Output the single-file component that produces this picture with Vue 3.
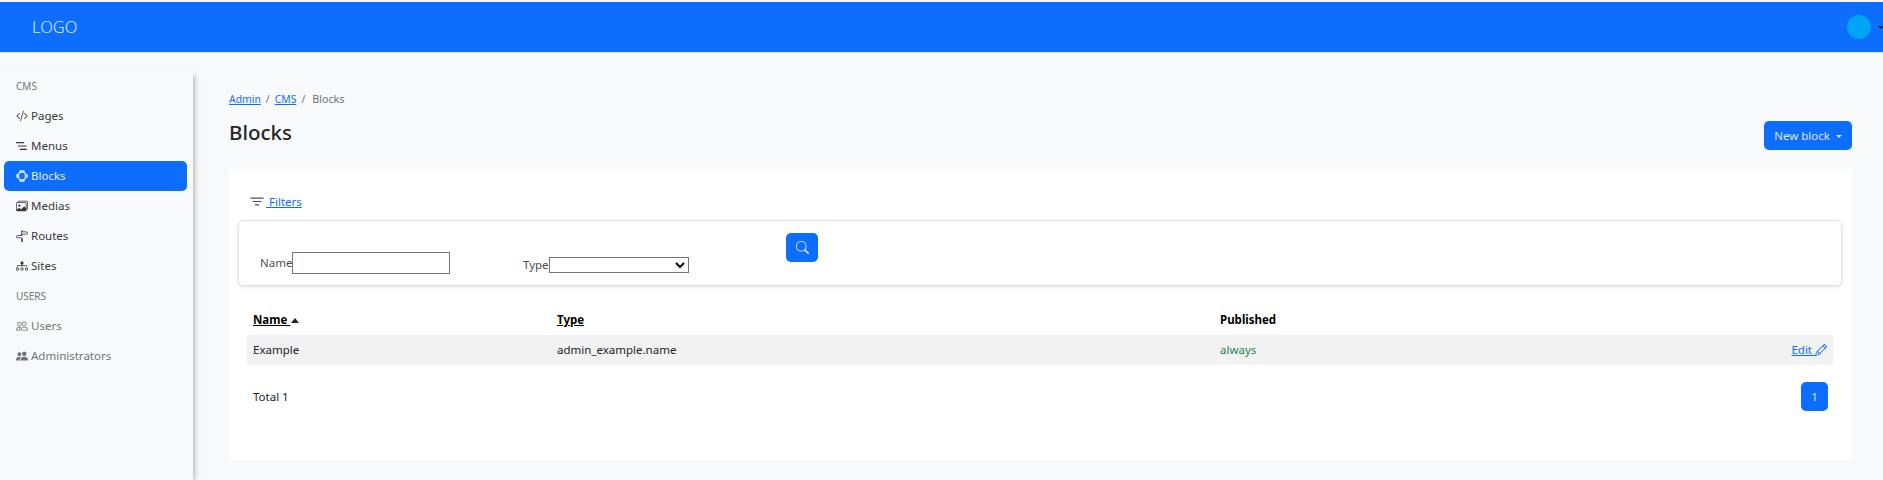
<template>
  <div class="page">
    <header class="topbar">
      <span class="logo">LOGO</span>
      <div class="user">
        <span class="avatar"></span>
        <span class="caret dark"></span>
      </div>
    </header>

    <div class="body">
      <aside class="sidebar">
        <template v-for="section in menu" :key="section.title">
          <div class="menu-title">{{ section.title }}</div>
          <a
            v-for="item in section.items"
            :key="item.label"
            class="menu-item"
            :class="{ active: item.active, muted: section.muted }"
          >
            <svg class="menu-icon" viewBox="0 0 16 16" fill="currentColor" v-html="item.icon"></svg>
            <span>{{ item.label }}</span>
          </a>
        </template>
      </aside>

      <main class="content">
        <nav class="breadcrumb">
          <a class="link">Admin</a><span class="sep">/</span>
          <a class="link">CMS</a><span class="sep">/</span>
          <span class="current">Blocks</span>
        </nav>

        <div class="title-row">
          <h1>Blocks</h1>
          <button class="btn new-btn">New block <span class="caret"></span></button>
        </div>

        <section class="panel">
          <a class="filters-link">
            <svg class="filter-icon" viewBox="0 0 16 16" fill="currentColor">
              <path d="M6 10.5a.5.5 0 0 1 .5-.5h3a.5.5 0 0 1 0 1h-3a.5.5 0 0 1-.5-.5zm-2-3a.5.5 0 0 1 .5-.5h7a.5.5 0 0 1 0 1h-7a.5.5 0 0 1-.5-.5zm-2-3a.5.5 0 0 1 .5-.5h11a.5.5 0 0 1 0 1h-11a.5.5 0 0 1-.5-.5z" />
            </svg>
            <span class="link">&nbsp;Filters</span>
          </a>

          <div class="filters">
            <label class="field name-field">Name<input type="text" /></label>
            <label class="field type-field">Type<select></select></label>
            <button class="btn search-btn" aria-label="Search">
              <svg viewBox="0 0 16 16" fill="currentColor" width="13" height="13">
                <path d="M11.742 10.344a6.5 6.5 0 1 0-1.397 1.398h-.001c.03.04.062.078.098.115l3.85 3.85a1 1 0 0 0 1.415-1.414l-3.85-3.85a1.007 1.007 0 0 0-.115-.1zM12 6.5a5.5 5.5 0 1 1-11 0 5.5 5.5 0 0 1 11 0z" />
              </svg>
            </button>
          </div>

          <table class="table">
            <thead>
              <tr>
                <th class="col-name"><a class="sort">Name&nbsp;</a><span class="sort-arrow"></span></th>
                <th class="col-type"><a class="sort">Type</a></th>
                <th class="col-pub">Published</th>
                <th></th>
              </tr>
            </thead>
            <tbody>
              <tr v-for="row in rows" :key="row.name">
                <td>{{ row.name }}</td>
                <td>{{ row.type }}</td>
                <td class="green">{{ row.published }}</td>
                <td class="actions">
                  <a class="link">Edit&nbsp;</a>
                  <svg class="edit-icon" viewBox="0 0 16 16" fill="currentColor">
                    <path d="M12.146.146a.5.5 0 0 1 .708 0l3 3a.5.5 0 0 1 0 .708l-10 10a.5.5 0 0 1-.168.11l-5 2a.5.5 0 0 1-.65-.65l2-5a.5.5 0 0 1 .11-.168l10-10zM11.207 2.5 13.5 4.793 14.793 3.5 12.5 1.207 11.207 2.5zm1.586 3L10.5 3.207 4 9.707V10h.5a.5.5 0 0 1 .5.5v.5h.5a.5.5 0 0 1 .5.5v.5h.293l6.5-6.5zm-9.761 5.175-.106.106-1.528 3.821 3.821-1.528.106-.106A.5.5 0 0 1 5 12.5V12h-.5a.5.5 0 0 1-.5-.5V11h-.5a.5.5 0 0 1-.468-.325z" />
                  </svg>
                </td>
              </tr>
            </tbody>
          </table>

          <div class="table-footer">
            <span>Total {{ rows.length }}</span>
            <button class="btn page-btn">1</button>
          </div>
        </section>
      </main>
    </div>
  </div>
</template>

<script setup>
/* MENU ICONS */
const icons = {
  code: '<path d="M10.478 1.647a.5.5 0 1 0-.956-.294l-4 13a.5.5 0 0 0 .956.294l4-13zM4.854 4.146a.5.5 0 0 1 0 .708L1.707 8l3.147 3.146a.5.5 0 0 1-.708.708l-3.5-3.5a.5.5 0 0 1 0-.708l3.5-3.5a.5.5 0 0 1 .708 0zm6.292 0a.5.5 0 0 0 0 .708L14.293 8l-3.147 3.146a.5.5 0 0 0 .708.708l3.5-3.5a.5.5 0 0 0 0-.708l-3.5-3.5a.5.5 0 0 0-.708 0z"/>',
  menu: '<path d="M0 2.8h11v1.4H0zM2.500 7.300H14v1.400H2.500zM5 11.800h9.500v1.400H5z"/>',
  block:
    '<g fill="none" stroke="currentColor" stroke-width="1.500"><rect x="3.500" y="3" width="9" height="10" rx="3"/><rect x="1" y="6" width="2.500" height="4" rx="1"/><rect x="12.500" y="6" width="2.500" height="4" rx="1"/><path d="M5.500 13v2h1.500v-2M9 13v2h1.500v-2M5.500 3V1h1.500v2M9 3V1h1.500v2"/></g>',
  media:
    '<path d="M4.502 9a1.500 1.500 0 1 0 0-3 1.500 1.500 0 0 0 0 3z"/><path d="M14.002 13a2 2 0 0 1-2 2h-10a2 2 0 0 1-2-2V5A2 2 0 0 1 2 3a2 2 0 0 1 2-2h10a2 2 0 0 1 2 2v8a2 2 0 0 1-1.998 2zM14 2H4a1 1 0 0 0-1 1h9.002a2 2 0 0 1 2 2v7A1 1 0 0 0 15 11V3a1 1 0 0 0-1-1zM2.002 4a1 1 0 0 0-1 1v8l2.646-2.354a.5.5 0 0 1 .63-.062l2.660 1.773 3.710-3.710a.5.5 0 0 1 .577-.094l1.777 1.947V5a1 1 0 0 0-1-1h-10z"/>',
  route:
    '<path fill-rule="evenodd" d="M7 7V1.414a1 1 0 0 1 2 0V2h5a1 1 0 0 1 .8.4l.975 1.300a.5.5 0 0 1 0 .6L14.800 5.600A1 1 0 0 1 14 6H9v1h-1v4h1v5H7v-5H2a1 1 0 0 1-.8-.4L.225 9.300a.5.5 0 0 1 0-.6L1.200 7.400A1 1 0 0 1 2 7h5zm1 3V8H2l-.75 1L2 10h6zm0-5h6l.75-1L14 3H8v2z"/>',
  sites:
    '<path d="M6 3.500A1.500 1.500 0 0 1 7.500 2h1A1.500 1.500 0 0 1 10 3.500v1A1.500 1.500 0 0 1 8.500 6v1H14a.5.5 0 0 1 .5.5v1a.5.5 0 0 1-1 0V8h-5v.5a.5.5 0 0 1-1 0V8h-5v.5a.5.5 0 0 1-1 0v-1A.5.5 0 0 1 2 7h5.500V6A1.500 1.500 0 0 1 6 4.500v-1zM0 11.500A1.500 1.500 0 0 1 1.500 10h1A1.500 1.500 0 0 1 4 11.500v1A1.500 1.500 0 0 1 2.500 14h-1A1.500 1.500 0 0 1 0 12.500v-1zm1.500-.5a.5.5 0 0 0-.5.5v1a.5.5 0 0 0 .5.5h1a.5.5 0 0 0 .5-.5v-1a.5.5 0 0 0-.5-.5h-1zm4.500.5A1.500 1.500 0 0 1 7.500 10h1a1.500 1.500 0 0 1 1.500 1.500v1A1.500 1.500 0 0 1 8.500 14h-1A1.500 1.500 0 0 1 6 12.500v-1zm1.500-.5a.5.5 0 0 0-.5.5v1a.5.5 0 0 0 .5.5h1a.5.5 0 0 0 .5-.5v-1a.5.5 0 0 0-.5-.5h-1zm4.500.5a1.500 1.500 0 0 1 1.500-1.500h1a1.500 1.500 0 0 1 1.500 1.500v1a1.500 1.500 0 0 1-1.500 1.500h-1a1.500 1.500 0 0 1-1.500-1.500v-1zm1.500-.5a.5.5 0 0 0-.5.5v1a.5.5 0 0 0 .5.5h1a.5.5 0 0 0 .5-.5v-1a.5.5 0 0 0-.5-.5h-1z"/>',
  users:
    '<path d="M15 14s1 0 1-1-1-4-5-4-5 3-5 4 1 1 1 1h8zm-7.978-1A.261.261 0 0 1 7 12.996c.001-.264.167-1.030.760-1.720C8.312 10.629 9.282 10 11 10c1.717 0 2.687.63 3.240 1.276.593.69.758 1.457.76 1.720l-.008.002a.274.274 0 0 1-.014.002H7.022zM11 7a2 2 0 1 0 0-4 2 2 0 0 0 0 4zm3-2a3 3 0 1 1-6 0 3 3 0 0 1 6 0zM6.936 9.280a5.880 5.880 0 0 0-1.230-.247A7.350 7.350 0 0 0 5 9c-4 0-5 3-5 4 0 .667.333 1 1 1h4.216A2.238 2.238 0 0 1 5 13c0-1.010.377-2.042 1.090-2.904.243-.294.526-.569.846-.816zM4.920 10A5.493 5.493 0 0 0 4 13H1c0-.26.164-1.030.760-1.724.545-.636 1.492-1.256 3.160-1.275zM1.500 5.500a3 3 0 1 1 6 0 3 3 0 0 1-6 0zm3-2a2 2 0 1 0 0 4 2 2 0 0 0 0-4z"/>',
  admin:
    '<path d="M7 14s-1 0-1-1 1-4 5-4 5 3 5 4-1 1-1 1H7zm4-6a3 3 0 1 0 0-6 3 3 0 0 0 0 6zm-5.784 6A2.238 2.238 0 0 1 5 13c0-1.355.68-2.750 1.936-3.720A6.325 6.325 0 0 0 5 9c-4 0-5 3-5 4s1 1 1 1h4.216zM4.500 8a2.500 2.500 0 1 0 0-5 2.500 2.500 0 0 0 0 5z"/>',
}

const menu = [
  {
    title: 'CMS',
    items: [
      { label: 'Pages', icon: icons.code },
      { label: 'Menus', icon: icons.menu },
      { label: 'Blocks', icon: icons.block, active: true },
      { label: 'Medias', icon: icons.media },
      { label: 'Routes', icon: icons.route },
      { label: 'Sites', icon: icons.sites },
    ],
  },
  {
    title: 'USERS',
    muted: true,
    items: [
      { label: 'Users', icon: icons.users },
      { label: 'Administrators', icon: icons.admin },
    ],
  },
]

const rows = [{ name: 'Example', type: 'admin_example.name', published: 'always' }]
</script>

<style>
html,
body {
  margin: 0;
  background: #f8f9fa;
}
</style>

<style scoped>
.page {
  width: 1883px;
  height: 480px;
  overflow: hidden;
  background: #f8f9fa;
  color: #212529;
  font-family: "Noto Sans", "Open Sans", sans-serif;
  font-size: 11.5px;
  line-height: 18px;
}

.topbar {
  display: flex;
  justify-content: space-between;
  align-items: center;
  box-sizing: border-box;
  height: 51px;
  margin-top: 2px;
  padding-left: 32px;
  background: #0d6efd;
  border-bottom: 1px solid #dfe3e8;
}

.logo {
  color: #dbe9ff;
  font-size: 16.5px;
  font-weight: 300;
}

.user {
  display: flex;
  align-items: center;
  gap: 7px;
}

.avatar {
  width: 24px;
  height: 24px;
  border-radius: 50%;
  background: #00a4f4;
}

.caret {
  display: inline-block;
  width: 0;
  height: 0;
  margin-left: 3px;
  vertical-align: 2px;
  border-top: 3.5px solid currentColor;
  border-left: 3.5px solid transparent;
  border-right: 3.5px solid transparent;
}

.caret.dark {
  color: #212529;
  margin-left: 0;
  margin-right: -1px;
}

.body {
  display: flex;
  height: 427px;
}

.sidebar {
  box-sizing: border-box;
  width: 193px;
  margin-top: 18px;
  padding: 0 6px 0 4px;
  background: #f8f9fa;
  box-shadow: 4px 2px 5px -2px rgba(0, 0, 0, 0.25);
}

.menu-title {
  display: flex;
  align-items: center;
  height: 30px;
  padding-left: 12px;
  font-size: 10px;
  color: #6c757d;
}

.menu-item {
  display: flex;
  align-items: center;
  gap: 3px;
  height: 30px;
  padding-left: 12px;
  border-radius: 5px;
  color: #343a40;
}

.menu-item.muted {
  color: #6c757d;
}

.menu-item.active {
  background: #0d6efd;
  color: #e7f1ff;
}

.menu-icon {
  width: 12px;
  height: 12px;
  flex-shrink: 0;
}

.content {
  flex: 1;
  min-width: 0;
  padding: 37px 31px 0 36px;
}

.link {
  color: #0d6efd;
  text-decoration: underline;
}

.breadcrumb {
  display: flex;
  align-items: center;
  height: 18px;
  font-size: 10.4px;
  color: #6c757d;
}

.sep {
  margin: 0 5px;
}

.current {
  margin-left: 2px;
  font-size: 10.7px;
}

.title-row {
  display: flex;
  justify-content: space-between;
  align-items: flex-start;
  height: 49px;
  margin-top: 12px;
}

h1 {
  margin: -1px 0 0;
  font-size: 20.5px;
  font-weight: 500;
  line-height: 26px;
}

.btn {
  border: none;
  border-radius: 5px;
  background: #0d6efd;
  color: #dbe9ff;
  font-family: inherit;
  font-size: 11.5px;
}

.new-btn {
  width: 88px;
  height: 29px;
  margin-top: 1px;
  padding: 0;
}

.panel {
  height: 291px;
  box-sizing: border-box;
  padding: 24px 10px 0 9px;
  background: #fff;
}

.filters-link {
  display: flex;
  align-items: center;
  height: 18px;
  margin-left: 10px;
}

.filter-icon {
  width: 18px;
  height: 18px;
  color: #495057;
}

.filters {
  display: flex;
  box-sizing: border-box;
  height: 66px;
  margin-top: 9px;
  border: 1px solid #dee2e6;
  border-radius: 5px;
  box-shadow: 0 1px 3px rgba(0, 0, 0, 0.12);
}

.field {
  display: flex;
  align-items: center;
  color: #495057;
}

.name-field {
  width: 263px;
  margin-left: 21px;
  padding-top: 20px;
}

.name-field input {
  box-sizing: border-box;
  width: 158px;
  height: 22px;
  padding: 0;
  border: 1px solid #767676;
  background: #fff;
}

.type-field {
  width: 263px;
  padding-top: 24px;
}

.type-field select {
  box-sizing: border-box;
  width: 140px;
  height: 16px;
  padding: 0;
  border: 1px solid #767676;
  background: #fff;
}

.search-btn {
  display: flex;
  align-items: center;
  justify-content: center;
  width: 32px;
  height: 29px;
  margin-top: 12px;
  padding: 0;
}

.table {
  width: calc(100% - 18px);
  margin: 17px 9px 0 9px;
  border-collapse: collapse;
}

th,
td {
  height: 30px;
  padding: 0 6px;
  text-align: left;
  box-sizing: border-box;
}

th {
  height: 32px;
  padding-top: 2px;
  font-weight: 700;
  color: #000;
}

tbody tr {
  background: #f2f2f2;
}

.col-name {
  width: 304px;
}

.col-type {
  width: 663px;
}

.sort {
  text-decoration: underline;
}

.sort-arrow {
  display: inline-block;
  width: 0;
  height: 0;
  margin-left: 1px;
  vertical-align: 1px;
  border-bottom: 5px solid #212529;
  border-left: 4.5px solid transparent;
  border-right: 4.5px solid transparent;
}

.green {
  color: #198754;
}

.actions {
  text-align: right;
  color: #0d6efd;
}

.edit-icon {
  width: 12px;
  height: 12px;
  vertical-align: -2px;
}

.table-footer {
  display: flex;
  justify-content: space-between;
  align-items: center;
  margin: 17px 14px 0 15px;
}

.page-btn {
  width: 27px;
  height: 29px;
  padding: 0;
}
</style>
